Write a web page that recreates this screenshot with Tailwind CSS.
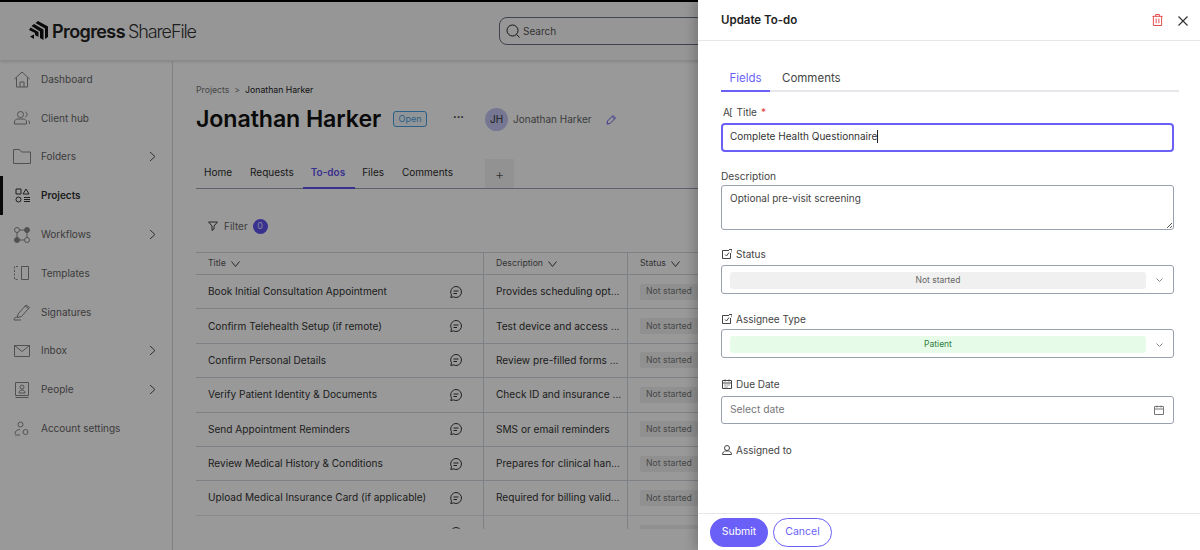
<!doctype html>
<html><head><meta charset="utf-8"><script src="https://cdn.jsdelivr.net/npm/@tailwindcss/browser@4"></script></head>
<body class="bg-white">
<div class="relative w-[1200px] h-[550px] overflow-hidden bg-white font-['Inter',sans-serif] text-[#2b2b2b]">
  <div class="h-[2px] bg-black"></div>
  <header class="h-[59px] flex items-center border-b border-gray-200 bg-[#fbfbfb] shadow-sm">
    <div class="w-[499px] pl-[29px] flex items-center">
      <svg class="w-[19px] h-[20px]" viewBox="0 0 19 20" fill="#111"><path d="M9 0l10 5.500V16l-3 2V7.500L6.500 2z"/><path d="M5 3l9.500 5.500V19l-3.500-2V10.500L2.500 5z"/><path d="M1.500 6.500L9.500 11v5L6 14v-2L0 9z"/><path d="M5 13.500V18l-4-2.500z"/></svg>
      <span class="ml-[4px] text-[18px] font-semibold tracking-[-0.6px] text-[#222]">Progress</span><span class="ml-[3px] text-[18px] font-light tracking-[-1.1px] text-[#333]">ShareFile</span>
    </div>
    <div class="w-[400px] h-[28px] border border-gray-500 rounded-lg flex items-center pl-[6px] gap-[3px]">
      <svg class="w-[14px] h-[14px]" viewBox="0 0 14 14" fill="none" stroke="#222" stroke-width="1"><circle cx="6.500" cy="6.500" r="5.500"/><path d="M10.500 10.500l3 3"/></svg>
      <span class="text-[10px] text-[#555]">Search</span>
    </div>
  </header>
  <div class="flex h-[489px]">
    <aside class="w-[173px] shrink-0 border-r border-gray-300 text-[10px] text-[#666]">
      <div class="-mt-[1px] h-[38.800px] flex items-center pl-[14px]"><span class="w-[27px]"><svg class="w-[16px] h-[17px]" viewBox="0 0 16 17" fill="none" stroke="#888"><path d="M.5 8L8 1l7.500 7M2.500 6.500V16h11V6.500M6 16v-5h4v5"/></svg></span><span>Dashboard</span></div>
      <div class="h-[38.800px] flex items-center pl-[14px]"><span class="w-[27px]"><svg class="w-[16px] h-[14px]" viewBox="0 0 16 14" fill="none" stroke="#888"><circle cx="6.500" cy="3.500" r="3"/><path d="M.5 13v-2c0-2 1.500-3 3.500-3h5c2 0 3.500 1 3.500 3v2zM11.500 1c2 1 2 4 0 5M14.500 9.500c1 .5 1 2 1 3.500"/></svg></span><span>Client hub</span></div>
      <div class="h-[38.800px] flex items-center pl-[13px] pr-[16px]"><span class="w-[28px]"><svg class="w-[18px] h-[15px]" viewBox="0 0 18 15" fill="none" stroke="#888"><path d="M.5.500h6l2 2.500h9v11.500H.5z"/></svg></span><span class="flex-1">Folders</span><svg class="w-[7px] h-[11px]" viewBox="0 0 7 11" fill="none" stroke="#555"><path d="M1 1l5 4.500L1 10"/></svg></div>
      <div class="h-[38.800px] flex items-center border-l-[3px] border-[#111] pl-[12px] font-semibold text-[#333]"><span class="w-[26px]"><svg class="w-[15px] h-[15px]" viewBox="0 0 15 15" fill="none" stroke="#333"><path d="M1 1h5v5H1zM11 1l3 5H8zM9 9.500h6M9 11.500h6M9 13.500h6"/><circle cx="3.500" cy="11.500" r="2.500"/></svg></span><span>Projects</span></div>
      <div class="h-[38.800px] flex items-center pl-[14px] pr-[16px]"><span class="w-[27px]"><svg class="w-[16px] h-[16px]" viewBox="0 0 16 16" fill="none" stroke="#888"><path d="M3 3h10v10H3z"/><circle cx="3" cy="3" r="2.500" fill="#fff"/><circle cx="13" cy="3" r="2.500" fill="#888"/><circle cx="3" cy="13" r="2.500" fill="#888"/><circle cx="13" cy="13" r="2.500" fill="#fff"/></svg></span><span class="flex-1">Workflows</span><svg class="w-[7px] h-[11px]" viewBox="0 0 7 11" fill="none" stroke="#555"><path d="M1 1l5 4.500L1 10"/></svg></div>
      <div class="h-[38.800px] flex items-center pl-[14px]"><span class="w-[27px]"><svg class="w-[15px] h-[14px]" viewBox="0 0 15 14" fill="none" stroke="#888"><path d="M4 .500H.5v13H4" stroke-dasharray="2 1.500"/><path d="M7.500.500h7v13h-7z"/></svg></span><span>Templates</span></div>
      <div class="h-[38.800px] flex items-center pl-[13px]"><span class="w-[28px]"><svg class="w-[18px] h-[18px]" viewBox="0 0 18 18" fill="none" stroke="#888"><path d="M5 11l8-9 3.500 2.500-8 9-4 1zM12 3l3.500 2.500M1 17h7M5 14c-3 0-4 1-4 3"/></svg></span><span>Signatures</span></div>
      <div class="h-[38.800px] flex items-center pl-[14px] pr-[16px]"><span class="w-[27px]"><svg class="w-[16px] h-[12px]" viewBox="0 0 16 12" fill="none" stroke="#888"><path d="M.5.500h15v11H.5zM.5.500L8 6.500l7.500-6"/></svg></span><span class="flex-1">Inbox</span><svg class="w-[7px] h-[11px]" viewBox="0 0 7 11" fill="none" stroke="#555"><path d="M1 1l5 4.500L1 10"/></svg></div>
      <div class="h-[38.800px] flex items-center pl-[15px] pr-[16px]"><span class="w-[26px]"><svg class="w-[14px] h-[16px]" viewBox="0 0 14 16" fill="none" stroke="#888"><path d="M.5.500h13v13H.5zM.5 15.500h13"/><circle cx="7" cy="5" r="2"/><path d="M4 11c0-2 1.500-3 3-3s3 1 3 3z"/></svg></span><span class="flex-1">People</span><svg class="w-[7px] h-[11px]" viewBox="0 0 7 11" fill="none" stroke="#555"><path d="M1 1l5 4.500L1 10"/></svg></div>
      <div class="h-[38.800px] flex items-center pl-[14px]"><span class="w-[27px]"><svg class="w-[15px] h-[15px]" viewBox="0 0 15 15" fill="none" stroke="#888"><circle cx="6.500" cy="3.500" r="2.500"/><path d="M1 13c0-3 2-4.500 5-4.500"/><circle cx="11.500" cy="11" r="2.500"/><path d="M1 14h5"/></svg></span><span>Account settings</span></div>
    </aside>
    <main class="flex-1 pl-[23px] pt-[23px] overflow-hidden">
      <div class="text-[8.700px] flex gap-[5px] h-[14px] items-center"><span class="text-[#777]">Projects</span><span class="text-[#777]">&gt;</span><span class="text-[#222]">Jonathan Harker</span></div>
      <div class="flex items-center h-[34px] mt-[4px]">
        <h1 class="text-[23.200px] font-semibold tracking-[-0.1px] text-[#111] w-[197px]">Jonathan Harker</h1>
        <span class="h-[16px] w-[34px] border border-[#4aa0e0] rounded-[3px] flex items-center justify-center text-[9px] text-[#4aa0e0] bg-[#f2f8fd]">Open</span>
        <span class="ml-[26px] text-[11px] leading-none text-[#222] font-bold -mt-[3px]">···</span>
        <span class="ml-[21px] w-[23px] h-[23px] rounded-full bg-[#c4c6f5] flex items-center justify-center text-[10px] text-[#333]">JH</span>
        <span class="ml-[5px] text-[10px] text-[#666]">Jonathan Harker</span>
        <svg class="ml-[14px] w-[11px] h-[11px]" viewBox="0 0 11 11" fill="none" stroke="#6a60f0"><path d="M1 10l.5-3L7 1.500 9.500 4 4 9.500zM6 2.500L8.500 5"/></svg>
      </div>
      <nav class="mt-[23px] h-[30px] w-[560px] border-b border-gray-400 flex text-[10px] relative">
        <span class="ml-[8px] mt-[6px]">Home</span>
        <span class="ml-[18px] mt-[6px]">Requests</span>
        <span class="ml-[17px] mt-[6px] font-semibold text-[#5f52ee]">To-dos</span>
        <span class="ml-[17px] mt-[6px]">Files</span>
        <span class="ml-[18px] mt-[6px]">Comments</span>
        <span class="ml-[32px] w-[29px] h-[29px] bg-[#f3f3f3] flex items-center justify-center text-[14px] font-light text-[#555]">+</span>
        <span class="absolute left-[107px] -bottom-[1px] w-[52px] h-[2px] bg-[#5f52ee]"></span>
      </nav>
      <div class="h-[63px] flex items-center pl-[12px] pt-[11px] gap-[5px] text-[10px] text-[#666]">
        <svg class="w-[10px] h-[10px]" viewBox="0 0 10 10" fill="none" stroke="#444"><path d="M.5 1h9L6 5v3l-2 1.500V5z"/></svg><span class="ml-[1px]">Filter</span>
        <span class="w-[15px] h-[15px] rounded-full bg-[#5f52ee] text-white/80 text-[9px] flex items-center justify-center">0</span>
      </div>
      <div class="w-[560px] border-t border-gray-300 h-[22px] flex text-[8.700px] text-[#555]">
        <div class="w-[288px] border-r border-gray-300 pl-[12px] flex items-center gap-[5px]">Title <svg class="w-[9px] h-[6px]" viewBox="0 0 9 6" fill="none" stroke="#444"><path d="M.5.500L4.500 5.500 8.500.500"/></svg></div>
        <div class="w-[144px] border-r border-gray-300 pl-[12px] flex items-center gap-[5px]">Description <svg class="w-[9px] h-[6px]" viewBox="0 0 9 6" fill="none" stroke="#444"><path d="M.5.500L4.500 5.500 8.500.500"/></svg></div>
        <div class="pl-[12px] flex items-center gap-[5px]">Status <svg class="w-[9px] h-[6px]" viewBox="0 0 9 6" fill="none" stroke="#444"><path d="M.5.500L4.500 5.500 8.500.500"/></svg></div>
      </div>
      <div class="w-[560px] h-[255px] overflow-hidden border-t border-gray-300 text-[10.100px] text-[#333]">
        <div class="h-[34.400px] flex border-b border-gray-300"><div class="w-[288px] border-r border-gray-300 pl-[12px] pr-[21px] flex items-center justify-between"><span>Book Initial Consultation Appointment</span><svg class="w-[12px] h-[12px]" viewBox="0 0 12 12" fill="none" stroke="#333"><path d="M6 .500a5.500 5.500 0 1 1-2.500 10.400L.8 11.500l.7-2.700A5.500 5.500 0 0 1 6 .500zM3.500 5h5M3.500 7.500h3.500"/></svg></div><div class="w-[144px] border-r border-gray-300 pl-[12px] flex items-center">Provides scheduling opt...</div><div class="pl-[12px] flex items-center"><span class="bg-[#f0f0f0] rounded-[2px] h-[16px] w-[58px] flex items-center pl-[6px] text-[8.700px] text-[#777] whitespace-nowrap">Not started</span></div></div>
        <div class="h-[34.400px] flex border-b border-gray-300"><div class="w-[288px] border-r border-gray-300 pl-[12px] pr-[21px] flex items-center justify-between"><span>Confirm Telehealth Setup (if remote)</span><svg class="w-[12px] h-[12px]" viewBox="0 0 12 12" fill="none" stroke="#333"><path d="M6 .500a5.500 5.500 0 1 1-2.500 10.400L.8 11.500l.7-2.700A5.500 5.500 0 0 1 6 .500zM3.500 5h5M3.500 7.500h3.500"/></svg></div><div class="w-[144px] border-r border-gray-300 pl-[12px] flex items-center">Test device and access ...</div><div class="pl-[12px] flex items-center"><span class="bg-[#f0f0f0] rounded-[2px] h-[16px] w-[58px] flex items-center pl-[6px] text-[8.700px] text-[#777] whitespace-nowrap">Not started</span></div></div>
        <div class="h-[34.400px] flex border-b border-gray-300"><div class="w-[288px] border-r border-gray-300 pl-[12px] pr-[21px] flex items-center justify-between"><span>Confirm Personal Details</span><svg class="w-[12px] h-[12px]" viewBox="0 0 12 12" fill="none" stroke="#333"><path d="M6 .500a5.500 5.500 0 1 1-2.500 10.400L.8 11.500l.7-2.700A5.500 5.500 0 0 1 6 .500zM3.500 5h5M3.500 7.500h3.500"/></svg></div><div class="w-[144px] border-r border-gray-300 pl-[12px] flex items-center">Review pre-filled forms ...</div><div class="pl-[12px] flex items-center"><span class="bg-[#f0f0f0] rounded-[2px] h-[16px] w-[58px] flex items-center pl-[6px] text-[8.700px] text-[#777] whitespace-nowrap">Not started</span></div></div>
        <div class="h-[34.400px] flex border-b border-gray-300"><div class="w-[288px] border-r border-gray-300 pl-[12px] pr-[21px] flex items-center justify-between"><span>Verify Patient Identity &amp; Documents</span><svg class="w-[12px] h-[12px]" viewBox="0 0 12 12" fill="none" stroke="#333"><path d="M6 .500a5.500 5.500 0 1 1-2.500 10.400L.8 11.500l.7-2.700A5.500 5.500 0 0 1 6 .500zM3.500 5h5M3.500 7.500h3.500"/></svg></div><div class="w-[144px] border-r border-gray-300 pl-[12px] flex items-center">Check ID and insurance ...</div><div class="pl-[12px] flex items-center"><span class="bg-[#f0f0f0] rounded-[2px] h-[16px] w-[58px] flex items-center pl-[6px] text-[8.700px] text-[#777] whitespace-nowrap">Not started</span></div></div>
        <div class="h-[34.400px] flex border-b border-gray-300"><div class="w-[288px] border-r border-gray-300 pl-[12px] pr-[21px] flex items-center justify-between"><span>Send Appointment Reminders</span><svg class="w-[12px] h-[12px]" viewBox="0 0 12 12" fill="none" stroke="#333"><path d="M6 .500a5.500 5.500 0 1 1-2.500 10.400L.8 11.500l.7-2.700A5.500 5.500 0 0 1 6 .500zM3.500 5h5M3.500 7.500h3.500"/></svg></div><div class="w-[144px] border-r border-gray-300 pl-[12px] flex items-center">SMS or email reminders</div><div class="pl-[12px] flex items-center"><span class="bg-[#f0f0f0] rounded-[2px] h-[16px] w-[58px] flex items-center pl-[6px] text-[8.700px] text-[#777] whitespace-nowrap">Not started</span></div></div>
        <div class="h-[34.400px] flex border-b border-gray-300"><div class="w-[288px] border-r border-gray-300 pl-[12px] pr-[21px] flex items-center justify-between"><span>Review Medical History &amp; Conditions</span><svg class="w-[12px] h-[12px]" viewBox="0 0 12 12" fill="none" stroke="#333"><path d="M6 .500a5.500 5.500 0 1 1-2.500 10.400L.8 11.500l.7-2.700A5.500 5.500 0 0 1 6 .500zM3.500 5h5M3.500 7.500h3.500"/></svg></div><div class="w-[144px] border-r border-gray-300 pl-[12px] flex items-center">Prepares for clinical han...</div><div class="pl-[12px] flex items-center"><span class="bg-[#f0f0f0] rounded-[2px] h-[16px] w-[58px] flex items-center pl-[6px] text-[8.700px] text-[#777] whitespace-nowrap">Not started</span></div></div>
        <div class="h-[34.400px] flex border-b border-gray-200"><div class="w-[288px] border-r border-gray-300 pl-[12px] pr-[21px] flex items-center justify-between"><span>Upload Medical Insurance Card (if applicable)</span><svg class="w-[12px] h-[12px]" viewBox="0 0 12 12" fill="none" stroke="#333"><path d="M6 .500a5.500 5.500 0 1 1-2.500 10.400L.8 11.500l.7-2.700A5.500 5.500 0 0 1 6 .500zM3.500 5h5M3.500 7.500h3.500"/></svg></div><div class="w-[144px] border-r border-gray-300 pl-[12px] flex items-center">Required for billing valid...</div><div class="pl-[12px] flex items-center"><span class="bg-[#f0f0f0] rounded-[2px] h-[16px] w-[58px] flex items-center pl-[6px] text-[8.700px] text-[#777] whitespace-nowrap">Not started</span></div></div>
        <div class="h-[34.400px] flex"><div class="w-[288px] border-r border-gray-300 pr-[21px] flex items-center justify-end"><svg class="w-[12px] h-[12px]" viewBox="0 0 12 12" fill="none" stroke="#333"><path d="M6 .500a5.500 5.500 0 1 1-2.500 10.400L.8 11.500l.7-2.700A5.500 5.500 0 0 1 6 .500z"/></svg></div><div class="w-[144px] border-r border-gray-300"></div><div class="pl-[12px] flex items-center"><span class="bg-[#f0f0f0] rounded-[2px] h-[16px] w-[58px]"></span></div></div>
      </div>
    </main>
  </div>
  <div class="absolute inset-0 bg-black/40"></div>
  <section class="absolute top-0 right-0 bottom-0 w-[502px] bg-white shadow-[-4px_0_10px_rgba(0,0,0,0.2)] flex flex-col text-[#333]">
    <div class="h-[41px] shrink-0 border-b border-gray-200 flex items-center pl-[23px] pr-[12px] pt-[1px]">
      <h2 class="flex-1 text-[11.500px] font-semibold text-[#222]">Update To-do</h2>
      <svg class="w-[11px] h-[12px] mr-[15px] -mt-[1px]" viewBox="0 0 12 13" fill="none" stroke="#e53e3e"><path d="M.5 2.500h11M4 2.500V.500h4v2M1.500 2.500v10h9v-10M4.500 5v5M7.500 5v5"/></svg>
      <svg class="w-[10px] h-[10px]" viewBox="0 0 10 10" fill="none" stroke="#333" stroke-width="1.200"><path d="M.5.500l9 9M9.500.500l-9 9"/></svg>
    </div>
    <div class="flex-1 pl-[23px] pr-[26px]">
      <div class="mt-[28px] w-[458px] h-[23px] border-b-2 border-gray-200 flex text-[11.500px] relative">
        <span class="w-[49px] text-center text-[#6a5ff7] h-[23px] border-b-2 border-[#6a5ff7] pt-[1px]">Fields</span>
        <span class="ml-[12px] pt-[1px] text-[#444]">Comments</span>
      </div>
      <label class="mt-[13px] h-[14px] flex items-center text-[10px] text-[#444] gap-[4px]"><span class="ml-[2px] text-[10px] tracking-[-1px] mr-[1px]">A[</span>Title <span class="text-[#e53e3e]">*</span></label>
      <div class="mt-[4px] w-[453px] h-[29px] rounded-[4px] border-2 border-[#6a60f5] flex items-center pl-[7px] pb-[2px] text-[10px] text-[#333]">Complete Health Questionnaire<span class="w-px h-[13px] bg-[#222]"></span></div>
      <label class="mt-[18px] h-[14px] flex items-center text-[10.200px] text-[#444]">Description</label>
      <div class="mt-[1px] w-[453px] h-[45px] rounded-[3px] border border-gray-400 pl-[8px] pt-[5px] text-[10px] text-[#444] relative">Optional pre-visit screening<svg class="absolute right-[1px] bottom-[1px] w-[5px] h-[5px]" viewBox="0 0 5 5" stroke="#555" fill="none"><path d="M0 5l5-5M3 5l2-2"/></svg></div>
      <label class="mt-[17px] h-[14px] flex items-center text-[10px] text-[#444] gap-[4px]"><svg class="ml-[1px] w-[10px] h-[10px]" viewBox="0 0 10 10" fill="none" stroke="#444"><path d="M8.500 4v5.500h-8v-8H7M3 5.500l1.500 1.500L7 3.500"/><path d="M7 .5h3v3"/></svg>Status</label>
      <div class="mt-[4px] w-[453px] h-[29px] rounded-[3px] border border-gray-400 flex items-center pl-[8px] pr-[10px] pt-[1px]"><div class="w-[416px] h-[17px] rounded-[3px] bg-[#f0f0f0] flex items-center justify-center text-[8.500px] text-[#666]">Not started</div><svg class="ml-auto w-[7px] h-[4px]" viewBox="0 0 7 4" fill="none" stroke="#888"><path d="M.5.500l3 3 3-3"/></svg></div>
      <label class="mt-[18px] h-[14px] flex items-center text-[10px] text-[#444] gap-[4px]"><svg class="ml-[1px] w-[10px] h-[10px]" viewBox="0 0 10 10" fill="none" stroke="#444"><path d="M8.500 4v5.500h-8v-8H7M3 5.500l1.500 1.500L7 3.500"/><path d="M7 .5h3v3"/></svg>Assignee Type</label>
      <div class="mt-[3px] w-[453px] h-[29px] rounded-[3px] border border-gray-400 flex items-center pl-[8px] pr-[10px] pt-[2px]"><div class="w-[416px] h-[17px] rounded-[3px] bg-[#e6fce8] flex items-center justify-center text-[8.500px] text-[#2f7d3f]">Patient</div><svg class="ml-auto w-[7px] h-[4px]" viewBox="0 0 7 4" fill="none" stroke="#888"><path d="M.5.500l3 3 3-3"/></svg></div>
      <label class="mt-[19px] h-[14px] flex items-center text-[10px] text-[#444] gap-[4px]"><svg class="ml-[1px] w-[10px] h-[10px]" viewBox="0 0 10 10" fill="none" stroke="#444"><path d="M.5 1.500h9v8h-9zM.5 4h9M3 .5v2M7 .5v2M2.500 6h1M4.500 6h1M6.500 6h1M2.500 8h1M4.500 8h1"/></svg>Due Date</label>
      <div class="mt-[5px] w-[453px] h-[28px] rounded-[3px] border border-gray-400 flex items-center pl-[8px] pr-[9px] text-[10.300px] text-[#777]"><span class="flex-1">Select date</span><svg class="w-[10px] h-[10px]" viewBox="0 0 10 10" fill="none" stroke="#777"><path d="M.5 1.500h9v8h-9zM.5 4h9M3 .5v2M7 .5v2"/></svg></div>
      <label class="mt-[19px] h-[14px] flex items-center text-[10px] text-[#444] gap-[4px]"><svg class="ml-[1px] w-[10px] h-[10px]" viewBox="0 0 10 10" fill="none" stroke="#444"><circle cx="5" cy="3" r="2.500"/><path d="M.5 9.500c0-2 1.500-3.500 3-3.500h3c1.500 0 3 1.500 3 3.500z"/></svg>Assigned to</label>
    </div>
    <div class="h-[37px] shrink-0 border-t border-gray-200 flex items-center pl-[12px] gap-[5px] text-[10.500px]">
      <button class="w-[58px] h-[29px] rounded-full bg-[#6a5ff7] text-white">Submit</button>
      <button class="w-[59px] h-[29px] rounded-full border border-[#6a5ff7] text-[#6a5ff7]">Cancel</button>
    </div>
  </section>
</div>
</body></html>
